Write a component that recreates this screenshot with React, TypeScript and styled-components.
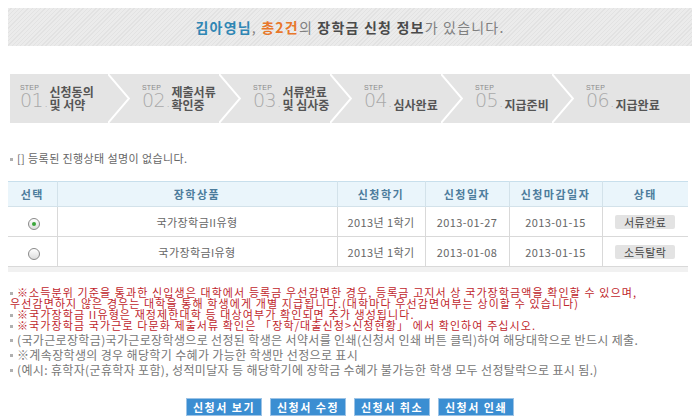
import React from 'react';
import styled, { createGlobalStyle } from 'styled-components';

const GlobalStyle = createGlobalStyle`
  body {
    margin: 0;
    background: #ffffff;
    font-family: 'Noto Sans CJK KR', 'Noto Sans', sans-serif;
  }
`;

const steps = [
  { no: '01', label: ['신청동의', '및 서약'] },
  { no: '02', label: ['제출서류', '확인중'] },
  { no: '03', label: ['서류완료', '및 심사중'] },
  { no: '04', label: ['심사완료'] },
  { no: '05', label: ['지급준비'] },
  { no: '06', label: ['지급완료'] },
];

const rows = [
  { checked: true, name: '국가장학금II유형', term: '2013년 1학기', date: '2013-01-27', due: '2013-01-15', status: '서류완료' },
  { checked: false, name: '국가장학금I유형', term: '2013년 1학기', date: '2013-01-08', due: '2013-01-15', status: '소득탈락' },
];

const Chevron = () => (
  <ChevronBox>
    <svg width="22" height="49" viewBox="0 0 22 49">
      <polyline points="0,0 21,24.5 0,49" fill="none" stroke="#ffffff" strokeWidth="2" />
    </svg>
  </ChevronBox>
);

const App: React.FC = () => {
  return (
    <Page>
      <GlobalStyle />
      <Banner>
        <Name>김아영님</Name>, <Count>총2건</Count>의 <Strong>장학금 신청 정보</Strong>가 있습니다.
      </Banner>

      <StepBar>
        {steps.map((s, i) => (
          <React.Fragment key={s.no}>
            <Step $first={i === 0} $last={i === steps.length - 1}>
              <StepNum>
                <StepTag>STEP</StepTag>
                <Digits>
                  {s.no}
                  <Dot>.</Dot>
                </Digits>
              </StepNum>
              <StepLabel>
                {s.label.map((l) => (
                  <span key={l}>{l}</span>
                ))}
              </StepLabel>
            </Step>
            {i < steps.length - 1 && <Chevron />}
          </React.Fragment>
        ))}
      </StepBar>

      <StatusLine>
        <Bullet />[] 등록된 진행상태 설명이 없습니다.
      </StatusLine>

      <Table>
        <colgroup>
          <col style={{ width: 49 }} />
          <col style={{ width: 280 }} />
          <col style={{ width: 88 }} />
          <col style={{ width: 84 }} />
          <col style={{ width: 93 }} />
          <col style={{ width: 86 }} />
        </colgroup>
        <thead>
          <tr>
            <Th>선택</Th>
            <Th>장학상품</Th>
            <Th>신청학기</Th>
            <Th>신청일자</Th>
            <Th>신청마감일자</Th>
            <Th>상태</Th>
          </tr>
        </thead>
        <tbody>
          {rows.map((r) => (
            <tr key={r.name}>
              <Td>
                <Radio $checked={r.checked} />
              </Td>
              <Td>{r.name}</Td>
              <Td>{r.term}</Td>
              <Td>{r.date}</Td>
              <Td>{r.due}</Td>
              <Td>
                <Badge>{r.status}</Badge>
              </Td>
            </tr>
          ))}
        </tbody>
      </Table>
      <TableShade />

      <Notes>
        <RedBlock>
          <Note $red>
            <Bullet />※소득분위 기준을 통과한 신입생은 대학에서 등록금 우선감면한 경우, 등록금 고지서 상 국가장학금액을 확인할 수 있으며,
            <br />
            우선감면하지 않은 경우는 대학을 통해 학생에게 개별 지급됩니다.(대학마다 우선감면여부는 상이할 수 있습니다)
          </Note>
          <Note $red>
            <Bullet />※국가장학금 II유형은 재정제한대학 등 대상여부가 확인되면 추가 생성됩니다.
          </Note>
          <Note $red>
            <Bullet />※국가장학금 국가근로 다문화 제출서류 확인은 「장학/대출신청&gt;신청현황」 에서 확인하여 주십시오.
          </Note>
        </RedBlock>
        <Note>
          <Bullet />(국가근로장학금)국가근로장학생으로 선정된 학생은 서약서를 인쇄(신청서 인쇄 버튼 클릭)하여 해당대학으로 반드시 제출.
        </Note>
        <Note>
          <Bullet />※계속장학생의 경우 해당학기 수혜가 가능한 학생만 선정으로 표시
        </Note>
        <Note>
          <Bullet />(예시: 휴학자(군휴학자 포함), 성적미달자 등 해당학기에 장학금 수혜가 불가능한 학생 모두 선정탈락으로 표시 됨.)
        </Note>
      </Notes>

      <Buttons>
        <Button>신청서 보기</Button>
        <Button>신청서 수정</Button>
        <Button>신청서 취소</Button>
        <Button>신청서 인쇄</Button>
      </Buttons>
    </Page>
  );
};

export default App;

const Page = styled.div`
  width: 700px;
  padding-top: 8px;
`;

const Banner = styled.div`
  margin: 0 8px;
  height: 38px;
  display: flex;
  align-items: center;
  justify-content: center;
  background: repeating-linear-gradient(135deg, #ebebeb 0 2px, #e2e2e2 2px 3px);
  font-size: 14px;
  letter-spacing: 1.2px;
  color: #808080;
  white-space: pre;
`;

const Name = styled.span`
  color: #2f86b4;
  font-weight: 700;
`;

const Count = styled.span`
  color: #e8772a;
  font-weight: 700;
`;

const Strong = styled.span`
  color: #4a4a4a;
  font-weight: 700;
`;

const StepBar = styled.div`
  display: flex;
  margin: 28px 0 0 10px;
  width: 680px;
  height: 49px;
  background: #e4e4e4;
`;

const Step = styled.div<{ $first: boolean; $last: boolean }>`
  box-sizing: border-box;
  display: flex;
  align-items: flex-end;
  gap: 2px;
  width: ${(p) => (p.$first ? '98px' : '89px')};
  flex: ${(p) => (p.$last ? '1' : 'none')};
  padding: 0 0 12px ${(p) => (p.$first ? '10px' : '12px')};
`;

const StepNum = styled.div`
  display: flex;
  flex-direction: column;
  line-height: 1;
`;

const StepTag = styled.span`
  font-family: 'Liberation Sans', Arial, sans-serif;
  font-size: 7px;
  line-height: 8px;
  color: #8a8a8a;
  letter-spacing: 0.2px;
`;

const Digits = styled.span`
  font-family: 'DejaVu Sans', sans-serif;
  font-weight: 200;
  font-size: 19px;
  line-height: 16px;
  color: #a9a9a9;
  letter-spacing: -0.5px;
`;

const Dot = styled.span`
  font-size: 12px;
  color: #888888;
  margin-left: 1px;
`;

const StepLabel = styled.div`
  display: flex;
  flex-direction: column;
  font-size: 12px;
  font-weight: 700;
  color: #555555;
  line-height: 13px;
  white-space: nowrap;
`;

const ChevronBox = styled.div`
  width: 22px;
  height: 49px;
  flex: none;
  line-height: 0;
`;

const Bullet = styled.span`
  display: inline-block;
  width: 3px;
  height: 3px;
  background: #b0b0b0;
  margin: 0 4px 2px 0;
  vertical-align: middle;
`;

const StatusLine = styled.div`
  margin: 27px 0 0 10px;
  font-size: 11px;
  color: #666666;
  line-height: 16px;
  letter-spacing: 0.4px;
`;

const Table = styled.table`
  margin: 15px 0 0 8px;
  width: 680px;
  border-collapse: collapse;
  table-layout: fixed;
  border-top: 1px solid #c8dfec;
`;

const Th = styled.th`
  height: 24px;
  padding: 0;
  background: #eaf5fb;
  border: 1px solid #d3e2ea;
  border-top: none;
  font-size: 11px;
  font-weight: 700;
  color: #4c7c9c;
  letter-spacing: 1.5px;
  &:first-child { border-left: none; }
  &:last-child { border-right: none; }
`;

const Td = styled.td`
  height: 29px;
  padding: 0;
  border: 1px solid #d9d9d9;
  text-align: center;
  font-size: 11px;
  color: #666666;
  letter-spacing: 0.4px;
  &:first-child { border-left: none; }
  &:last-child { border-right: none; }
`;

const TableShade = styled.div`
  margin-left: 8px;
  width: 680px;
  height: 5px;
  background: #f1f1f1;
`;

const Radio = styled.span<{ $checked: boolean }>`
  display: inline-block;
  position: relative;
  width: 10px;
  height: 10px;
  margin-left: 3px;
  border: 1px solid #8a8a8a;
  border-radius: 50%;
  background: linear-gradient(#ffffff, #dcdcdc);
  vertical-align: middle;
  &::after {
    content: '';
    display: ${(p) => (p.$checked ? 'block' : 'none')};
    position: absolute;
    left: 3px;
    top: 3px;
    width: 4px;
    height: 4px;
    border-radius: 50%;
    background: #3aa63a;
  }
`;

const Badge = styled.span`
  display: inline-block;
  width: 60px;
  height: 14px;
  line-height: 14px;
  background: #e3e3e3;
  border-radius: 2px;
  font-size: 11px;
  color: #444444;
  letter-spacing: 0.5px;
`;

const Notes = styled.div`
  margin: 15px 0 0 10px;
  display: flex;
  flex-direction: column;
  gap: 3px;
`;

const RedBlock = styled.div`
  display: flex;
  flex-direction: column;
`;

const Note = styled.div<{ $red?: boolean }>`
  font-size: ${(p) => (p.$red ? '11px' : '12px')};
  line-height: ${(p) => (p.$red ? '11px' : '12px')};
  color: ${(p) => (p.$red ? '#c0262c' : '#777777')};
  white-space: nowrap;
  letter-spacing: ${(p) => (p.$red ? '1.1px' : '0.35px')};
`;

const Buttons = styled.div`
  display: flex;
  justify-content: center;
  gap: 8px;
  margin-top: 22px;
`;

const Button = styled.button`
  width: 76px;
  height: 18px;
  padding: 0;
  border: 1px solid #9cc3e6;
  background: #3b8ed2;
  color: #ffffff;
  font-family: 'Noto Sans CJK KR', sans-serif;
  font-size: 11px;
  font-weight: 700;
  letter-spacing: 1.5px;
  line-height: 16px;
`;
